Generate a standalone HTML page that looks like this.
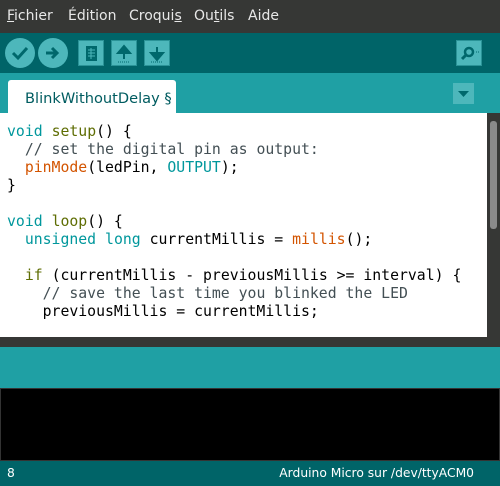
<!DOCTYPE html>
<html><head><meta charset="utf-8"><style>
*{margin:0;padding:0;box-sizing:border-box}
body{width:500px;height:486px;overflow:hidden;font-family:"DejaVu Sans","Liberation Sans",sans-serif;background:#006468;position:relative}
.menu{position:absolute;top:0;left:0;width:500px;height:33px;background:#363735;color:#e8e8e8;font-size:14px}
.menu span{position:absolute;top:8px}
.tb{position:absolute;top:33px;left:0;width:500px;height:40px;background:#006468}
.circ{position:absolute;top:38px;width:30px;height:30px;border-radius:50%;background:#4db7bb}
.sq{position:absolute;top:40px;width:26px;height:26px;background:#4db7bb;border:1px solid #2a9397}
.tabs{position:absolute;top:73px;left:0;width:500px;height:40px;background:#1fa0a4}
.tab{position:absolute;left:8px;top:80px;width:168px;height:35px;background:#fff;border-radius:3px 3px 0 0;color:#005c60;font-size:14.6px;padding:10px 0 0 17px}
.ed{position:absolute;top:113px;left:0;width:487px;height:224px;background:#fff}
.sb{position:absolute;top:113px;left:487px;width:13px;height:224px;background:#363735}
.thumb{position:absolute;top:121px;left:490px;width:7px;height:108px;background:#8a8a8a;border-radius:3px}
pre{position:absolute;top:123px;left:7px;font-family:"DejaVu Sans Mono","Liberation Mono",monospace;font-size:14.8px;line-height:18px;color:#000}
.k{color:#00979c}.f{color:#5e6d03}.o{color:#d35400}.c{color:#434f54}
.dark{position:absolute;top:337px;left:0;width:500px;height:10px;background:#363735}
.mid{position:absolute;top:347px;left:0;width:500px;height:41px;background:#1fa0a4}
.con{position:absolute;top:388px;left:0;width:500px;height:73px;background:#000;border:1px solid #333}
.st{position:absolute;top:461px;left:0;width:500px;height:25px;background:#006468;color:#fff;font-size:12.3px}
</style></head><body>
<div class="menu"><span style="left:7px"><u>F</u>ichier</span><span style="left:68px">Édition</span><span style="left:129px">Croqui<u>s</u></span><span style="left:194px">Ou<u>t</u>ils</span><span style="left:248px">Aide</span></div>
<div class="tb"></div>
<div class="circ" style="left:5px"></div><div class="circ" style="left:38px"></div>
<svg style="position:absolute;left:5px;top:38px" width="64" height="30"><path d="M8 15l5 5 9-10" stroke="#00686c" stroke-width="3" fill="none"/><path d="M41 15h10M47 10l5 5-5 5" stroke="#00686c" stroke-width="3" fill="none"/></svg>
<div class="sq" style="left:78px"></div><div class="sq" style="left:111px"></div><div class="sq" style="left:144px"></div><div class="sq" style="left:456px;top:40px"></div>
<svg style="position:absolute;left:78px;top:40px" width="100" height="28"><rect x="8" y="6" width="11" height="15" fill="#00686c"/><path d="M10 10h7M10 13h7M10 16h7M13 8v11" stroke="#4db7bb" stroke-width="1"/><path d="M46 13l-6 0 6-7 6 7h-6v6" fill="#00686c" stroke="#00686c" stroke-width="2"/><path d="M40 22h12" stroke="#00686c" stroke-dasharray="1 1"/><path d="M79 7v6h-6l6 7 6-7h-6" fill="#00686c" stroke="#00686c" stroke-width="2"/><path d="M73 22h12" stroke="#00686c" stroke-dasharray="1 1"/></svg>
<svg style="position:absolute;left:456px;top:40px" width="28" height="28"><circle cx="13" cy="12" r="4" fill="none" stroke="#00686c" stroke-width="2.5"/><path d="M10 15l-4 4" stroke="#00686c" stroke-width="3"/><path d="M20 12h4" stroke="#00686c" stroke-dasharray="1 1"/></svg>
<div class="tabs"></div>
<div class="tab">BlinkWithoutDelay §</div>
<div style="position:absolute;left:453px;top:83px;width:21px;height:21px;background:#4db7bb"></div>
<svg style="position:absolute;left:453px;top:83px" width="21" height="21"><path d="M5 8h11l-5.5 6z" fill="#00686c"/></svg>
<div class="ed"></div><div class="sb"></div><div class="thumb"></div>
<pre><span class="k">void</span> <span class="f">setup</span>() {
  <span class="c">// set the digital pin as output:</span>
  <span class="o">pinMode</span>(ledPin, <span class="k">OUTPUT</span>);
}

<span class="k">void</span> <span class="f">loop</span>() {
  <span class="k">unsigned</span> <span class="k">long</span> currentMillis = <span class="o">millis</span>();

  <span class="f">if</span> (currentMillis - previousMillis &gt;= interval) {
    <span class="c">// save the last time you blinked the LED</span>
    previousMillis = currentMillis;</pre>
<div class="dark"></div><div class="mid"></div><div class="con"></div>
<div class="st"><span style="position:absolute;left:7px;top:5px">8</span><span style="position:absolute;right:26px;top:5px">Arduino Micro sur /dev/ttyACM0</span></div>
</body></html>
